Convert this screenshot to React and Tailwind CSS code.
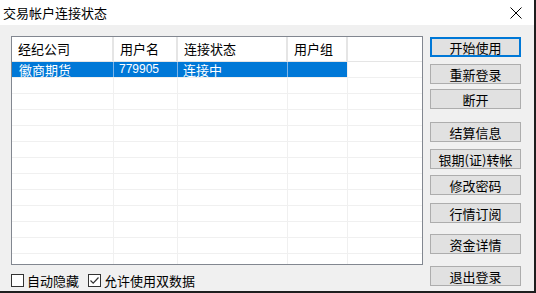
import React from 'react';

const font = { fontFamily: '"Microsoft YaHei", "Noto Sans CJK SC", sans-serif' };

const columns = [
    { label: '经纪公司', w: 'w-[102px]' },
    { label: '用户名', w: 'w-[64px]' },
    { label: '连接状态', w: 'w-[110px]' },
    { label: '用户组', w: 'w-[60px]' },
];

const buttons = [
    { label: '开始使用', mt: 'mt-[1px]', primary: true },
    { label: '重新登录', mt: 'mt-[7px]' },
    { label: '断开', mt: 'mt-[5px]' },
    { label: '结算信息', mt: 'mt-[13px]' },
    { label: '银期(证)转帐', mt: 'mt-[7px]' },
    { label: '修改密码', mt: 'mt-[6px]' },
    { label: '行情订阅', mt: 'mt-[8px]' },
    { label: '资金详情', mt: 'mt-[11px]' },
    { label: '退出登录', mt: 'mt-[12px]' },
];

const Checkbox = ({ checked, label }) => (
    <label className="flex items-center gap-[3px] text-[13px] text-black">
        <span className="w-[13px] h-[13px] border border-[#333] bg-white flex items-center justify-center">
            {checked && (
                <svg width="11" height="11" viewBox="0 0 11 11">
                    <path d="M1.5 5.5 L4.2 8.2 L9.5 2.5" fill="none" stroke="#333" strokeWidth="1.2" />
                </svg>
            )}
        </span>
        {label}
    </label>
);

const App = () => {
    const emptyRows = Array.from({ length: 12 });

    return (
        <div className="w-[536px] h-[293px] bg-[#1e1e1e] overflow-hidden" style={font}>
            <div className="w-[534px] h-[291px] flex flex-col bg-[#f0f0f0]">
                {/* title bar */}
                <div className="h-[25px] bg-white flex items-center justify-between pl-[3px] pr-[12px]">
                    <span className="text-[13px] text-black leading-none">交易帐户连接状态</span>
                    <svg width="12" height="12" viewBox="0 0 12 12">
                        <path d="M0.5 0.5 L11.5 11.5 M11.5 0.5 L0.5 11.5" stroke="#000" strokeWidth="1" />
                    </svg>
                </div>

                <div className="flex pl-[11px] pt-[11px]">
                    {/* left: list + checkboxes */}
                    <div className="flex flex-col">
                        <div className="w-[412px] h-[229px] border border-[#828790] bg-white overflow-hidden">
                            <div className="h-[25px] flex border-b border-[#e5e5e5]">
                                {columns.map((c) => (
                                    <div key={c.label} className={`${c.w} border-r-2 border-[#e5e5e5] pl-[6px] flex items-center text-[13px] text-black`}>
                                        {c.label}
                                    </div>
                                ))}
                            </div>
                            <div className="h-[16px] flex border-b border-[#f0f0f0]">
                                <div className="w-[102px] bg-[#0078d7] border-r border-[#7fb5e8] pl-[7px] text-[13px] text-white leading-[15px]">徽商期货</div>
                                <div className="w-[64px] bg-[#0078d7] border-r border-[#7fb5e8] pl-[5px] text-[12px] text-white leading-[15px]" style={{ fontFamily: '"Liberation Sans", sans-serif' }}>779905</div>
                                <div className="w-[110px] bg-[#0078d7] border-r border-[#7fb5e8] pl-[5px] text-[13px] text-white leading-[15px]">连接中</div>
                                <div className="w-[60px] bg-[#0078d7] border-r border-[#f0f0f0]"></div>
                            </div>
                            {emptyRows.map((_, i) => (
                                <div key={i} className="h-[16px] flex border-b border-[#f0f0f0]">
                                    {columns.map((c) => (
                                        <div key={c.label} className={`${c.w} border-r border-[#f0f0f0]`}></div>
                                    ))}
                                </div>
                            ))}
                        </div>
                        <div className="flex items-center gap-[9px] mt-[6px]">
                            <Checkbox label="自动隐藏" />
                            <Checkbox checked label="允许使用双数据" />
                        </div>
                    </div>

                    {/* right: buttons */}
                    <div className="flex flex-col ml-[7px]">
                        {buttons.map((b) => (
                            <button
                                key={b.label}
                                className={`${b.mt} w-[91px] h-[20px] bg-[#e1e1e1] text-[13px] text-black leading-none flex items-center justify-center ${b.primary ? 'border-2 border-[#0078d7]' : 'border border-[#adadad]'}`}
                            >
                                {b.label}
                            </button>
                        ))}
                    </div>
                </div>
            </div>
        </div>
    );
};

export default App;
